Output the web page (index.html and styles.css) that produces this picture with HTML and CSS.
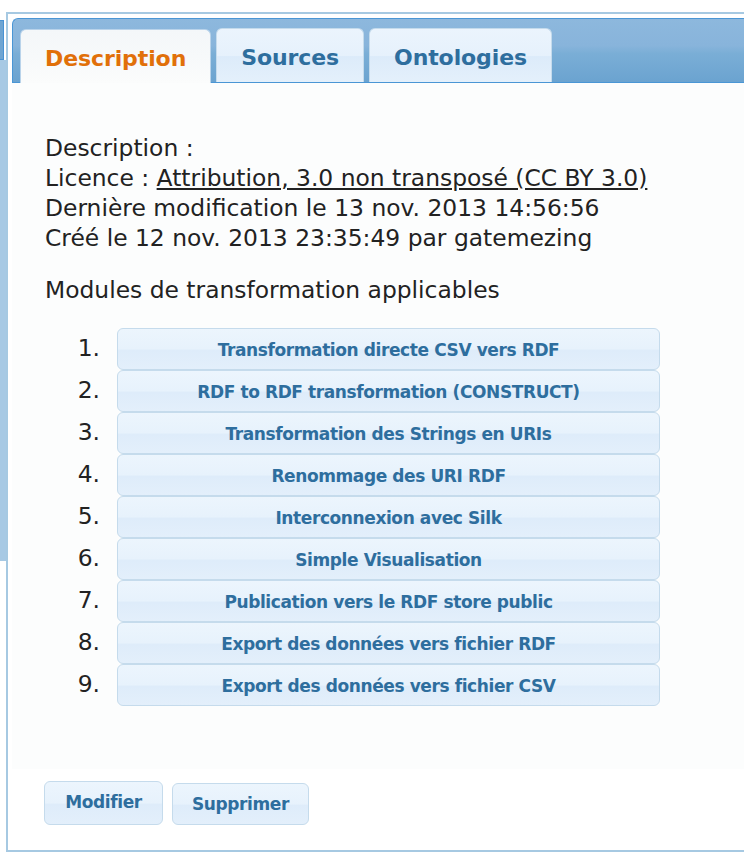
FILE: index.html
```html
<!DOCTYPE html>
<html lang="fr">
<head>
<meta charset="utf-8">
<title>Description</title>
<link rel="stylesheet" href="styles.css">
</head>
<body>
<div class="backdrop"><div class="backdrop-tab"></div></div>
<div class="dialog">
  <div class="tabs">
    <ul class="tab-nav">
      <li class="tab active">Description</li>
      <li class="tab">Sources</li>
      <li class="tab">Ontologies</li>
    </ul>
    <div class="panel">
      <div class="meta">
        <div>Description :</div>
        <div>Licence : <a class="licence" href="#">Attribution, 3.0 non transposé (CC BY 3.0)</a></div>
        <div>Dernière modification le 13 nov. 2013 14:56:56</div>
        <div>Créé le 12 nov. 2013 23:35:49 par gatemezing</div>
      </div>
      <p class="modules-title">Modules de transformation applicables</p>
      <ol class="modules">
        <li><span class="num">1.</span><button class="ui-btn module-btn">Transformation directe CSV vers RDF</button></li>
        <li><span class="num">2.</span><button class="ui-btn module-btn">RDF to RDF transformation (CONSTRUCT)</button></li>
        <li><span class="num">3.</span><button class="ui-btn module-btn">Transformation des Strings en URIs</button></li>
        <li><span class="num">4.</span><button class="ui-btn module-btn">Renommage des URI RDF</button></li>
        <li><span class="num">5.</span><button class="ui-btn module-btn">Interconnexion avec Silk</button></li>
        <li><span class="num">6.</span><button class="ui-btn module-btn">Simple Visualisation</button></li>
        <li><span class="num">7.</span><button class="ui-btn module-btn">Publication vers le RDF store public</button></li>
        <li><span class="num">8.</span><button class="ui-btn module-btn">Export des données vers fichier RDF</button></li>
        <li><span class="num">9.</span><button class="ui-btn module-btn">Export des données vers fichier CSV</button></li>
      </ol>
    </div>
    <div class="actions">
      <button class="ui-btn action-btn modify">Modifier</button>
      <button class="ui-btn action-btn delete">Supprimer</button>
    </div>
  </div>
</div>
</body>
</html>
```
FILE: styles.css
```css
* { box-sizing: border-box; }

html, body {
  margin: 0;
  padding: 0;
  background: #ffffff;
  width: 744px;
  height: 854px;
  overflow: hidden;
}

body {
  position: relative;
  font-family: "DejaVu Sans", "Liberation Sans", sans-serif;
  color: #222222;
}

.backdrop {
  position: absolute;
  left: 0;
  top: 60px;
  width: 7px;
  height: 501px;
  background: #a7c9e4;
}

.backdrop-tab {
  position: absolute;
  left: 0;
  top: -40px;
  width: 4px;
  height: 40px;
  background: #6fa5d2;
  border-right: 1px solid #4a93d3;
  border-top: 1px solid #4a93d3;
  border-bottom: 1px solid #4a93d3;
}

.dialog {
  position: relative;
  margin: 12px 0 0 6px;
  width: 738px;
  height: 840px;
  border: 2px solid #a6c9e2;
  border-right: none;
  padding: 4px 0 4px 4px;
  background: #ffffff;
}

.tabs {
  display: flex;
  flex-direction: column;
}

.tab-nav {
  display: flex;
  align-items: flex-end;
  margin: 0;
  padding: 0 0 0 7px;
  list-style: none;
  height: 65px;
  border: 1px solid #4a96d5;
  border-right: none;
  border-radius: 6px 0 0 0;
  background: linear-gradient(#8db8dd 0%, #88b4db 42%, #7aaed6 55%, #6ba3d0 100%);
}

.tab {
  display: flex;
  align-items: center;
  height: 54px;
  padding: 3px 24px 0;
  margin-right: 5px;
  font-size: 22px;
  font-weight: bold;
  letter-spacing: -0.1px;
  color: #2e6e9e;
  border: 1px solid #c5dbec;
  border-bottom: none;
  border-radius: 6px 6px 0 0;
  background: linear-gradient(#ebf4fd 0%, #e6f1fc 50%, #dcebfa 52%, #e4f0fb 100%);
}

.tab.active {
  color: #e17009;
  margin-bottom: -1px;
  border-color: #b9d3ea;
  background: linear-gradient(#f4f7f9 0%, #f7f9fa 50%, #fbfcfc 100%);
}

.panel {
  padding: 50px 0 63px 33px;
  background: #fcfdfd;
}

.meta {
  font-size: 23.4px;
  line-height: 30px;
}

.licence {
  color: #222222;
  text-decoration: underline;
}

.modules-title {
  margin: 22px 0 0;
  font-size: 23.4px;
  line-height: 30px;
}

.modules {
  margin: 23px 0 0;
  padding: 0;
  list-style: none;
}

.modules li {
  display: flex;
  align-items: center;
  height: 42px;
}

.num {
  width: 55px;
  margin-right: 17px;
  text-align: right;
  font-size: 23.4px;
  line-height: 30px;
  margin-top: -3px;
}

.ui-btn {
  font-family: "DejaVu Sans", "Liberation Sans", sans-serif;
  font-weight: bold;
  font-size: 17px;
  letter-spacing: -0.4px;
  color: #2e6e9e;
  border: 1px solid #c5dbec;
  border-radius: 6px;
  background: linear-gradient(#ecf5fd 0%, #e7f2fc 50%, #deecfa 53%, #e3effb 100%);
  padding: 0;
  cursor: pointer;
}

.module-btn {
  width: 543px;
  height: 42px;
  padding-top: 1px;
}

.actions {
  display: flex;
  align-items: flex-end;
  gap: 9px;
  padding: 12px 0 0 32px;
}

.action-btn.modify {
  height: 44px;
  width: 119px;
  padding: 0 0 2px;
}

.action-btn.delete {
  height: 42px;
  width: 137px;
  padding: 0;
}
```
